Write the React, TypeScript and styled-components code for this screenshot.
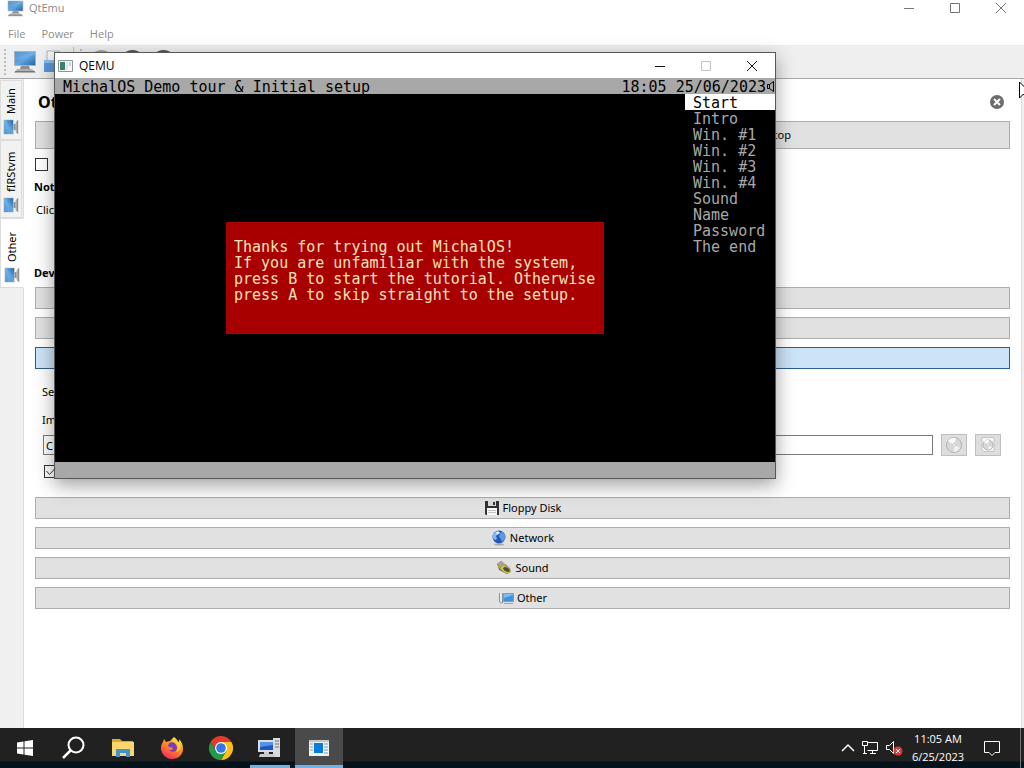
import React from "react";
import styled, { createGlobalStyle } from "styled-components";

const ui = `"Noto Sans", "Open Sans", sans-serif`;
const shell = `"Open Sans", "Noto Sans", sans-serif`;
const term = `"DejaVu Sans Mono", monospace`;

const Global = createGlobalStyle`
  * { box-sizing: border-box; }
  html, body, #root { margin: 0; height: 100%; }
  body { overflow: hidden; background: #fff; font: 11px/16px ${ui}; color: #000; }
  button, input { font: inherit; color: inherit; margin: 0; }
  svg { display: block; flex: none; }
`;

const Desktop = styled.div`
  position: relative;
  display: flex;
  flex-direction: column;
  height: 100%;
`;

const AppWindow = styled.div`
  flex: 1;
  min-height: 0;
  display: flex;
  flex-direction: column;
`;

const AppTitle = styled.header`
  display: flex;
  height: 24px;
  padding-left: 7px;
  color: #8a8a8a;
  font: 11px/16px ${shell};
`;

const TitleText = styled.span`
  flex: 1;
  margin-left: 5px;
`;

const WinButton = styled.button<{ $tone: string }>`
  display: flex;
  align-items: center;
  justify-content: center;
  width: 46px;
  height: 100%;
  padding: 0;
  border: 0;
  background: none;
  color: ${(p) => p.$tone};
`;

const Controls = styled.div<{ $height: number }>`
  display: flex;
  height: ${(p) => p.$height}px;
`;

const MenuBar = styled.nav`
  display: flex;
  gap: 2px;
  height: 22px;
  padding-left: 1px;
  border-bottom: 1px solid #ececec;
`;

const MenuItem = styled.button`
  padding: 0 7px 2px;
  border: 0;
  background: none;
  color: #8c8c8c;
  font: 11px/18px ${shell};
`;

const ToolBar = styled.div`
  display: flex;
  align-items: center;
  gap: 6px;
  height: 33px;
  padding-left: 4px;
  background: #efefef;
  border-bottom: 1px solid #a9a9a9;
`;

const Grip = styled.span`
  width: 3px;
  height: 26px;
  border-left: 2px dotted #bcbcbc;
`;

const ToolSeparator = styled.span`
  width: 1px;
  height: 30px;
  background: #c6c6c6;
`;

const ToolButton = styled.button`
  padding: 0;
  border: 0;
  background: none;
`;

const RoundTool = styled.button<{ $tone: string }>`
  width: 25px;
  height: 25px;
  padding: 0;
  border: 0;
  border-radius: 50%;
  background: ${(p) => p.$tone};
`;

const Body = styled.div`
  flex: 1;
  min-height: 0;
  display: flex;
  background: #f0f0f0;
`;

const TabStrip = styled.div`
  width: 24px;
  padding-top: 1px;
  border-right: 1px solid #dcdcdc;
`;

const Tab = styled.button<{ $active?: boolean; $height: number }>`
  display: flex;
  align-items: center;
  gap: 5px;
  width: ${(p) => (p.$active ? 24 : 22)}px;
  height: ${(p) => p.$height}px;
  padding: 4px 0;
  border: 1px solid #dcdcdc;
  border-left-color: ${(p) => (p.$active ? "#fff" : "#dcdcdc")};
  background: ${(p) => (p.$active ? "#fff" : "#f2f2f2")};
  line-height: 20px;
  writing-mode: vertical-rl;
  transform: rotate(180deg);
  white-space: nowrap;
  & > svg { transform: rotate(90deg); }
`;

const Panel = styled.main`
  flex: 1;
  min-width: 0;
  padding: 12px 11px;
  background: #fff;
`;

const PanelEdge = styled.div`
  width: 3px;
  border-left: 1px solid #dcdcdc;
`;

const PanelHead = styled.div`
  display: flex;
  align-items: center;
  justify-content: space-between;
  height: 22px;
  padding: 0 6px 0 3px;
`;

const Heading = styled.h1`
  margin: 0;
  font: bold 16px/22px ${ui};
`;

const CloseButton = styled.button`
  padding: 0;
  border: 0;
  background: none;
`;

const PowerRow = styled.div`
  display: grid;
  grid-template-columns: 1fr 1fr;
  gap: 8px;
  margin-top: 8px;
`;

const Push = styled.button<{ $tall?: boolean; $selected?: boolean }>`
  display: flex;
  align-items: center;
  justify-content: center;
  gap: 3px;
  width: 100%;
  height: ${(p) => (p.$tall ? 28 : 22)}px;
  padding: 0;
  border: 1px solid ${(p) => (p.$selected ? "#2b5f8c" : "#adadad")};
  background: ${(p) => (p.$selected ? "#cce4f7" : "#e1e1e1")};
`;

const StopText = styled.span`
  margin-left: 22px;
`;

const Check = styled.label`
  display: flex;
  align-items: center;
  gap: 6px;
  height: 16px;
`;

const Box = styled.input`
  appearance: none;
  width: 13px;
  height: 13px;
  border: 1px solid #333;
  background: #fff;
`;

const BoxWrap = styled.span`
  display: grid;
  & > * { grid-area: 1 / 1; }
  & > svg { z-index: 1; pointer-events: none; }
`;

const Options = styled.section`
  display: flex;
  flex-direction: column;
  gap: 7px;
  margin-top: 7px;
`;

const SubHead = styled.h2`
  margin: 0 0 0 -1px;
  font: bold 11px/16px ${ui};
`;

const Line = styled.p`
  margin: 0 0 0 1px;
`;

const Devices = styled.section`
  margin-top: 47px;
`;

const Stack = styled.div`
  display: flex;
  flex-direction: column;
  gap: 8px;
  margin-top: 6px;
`;

const MediaForm = styled.div`
  display: flex;
  flex-direction: column;
  padding: 15px 9px 12px 7px;
  gap: 12px;
`;

const PathRow = styled.div`
  display: flex;
  align-items: center;
  gap: 8px;
  padding-left: 1px;
  margin: -6px 0 -5px;
`;

const PathInput = styled.input`
  flex: 1;
  min-width: 0;
  height: 20px;
  padding: 0 2px;
  border: 1px solid #7a7a7a;
  background: #fff;
`;

const IconButton = styled.button`
  display: flex;
  align-items: center;
  justify-content: center;
  width: 26px;
  height: 22px;
  padding: 0;
  border: 1px solid #bfbfbf;
  background: #dedede;
`;

const MediaCheck = styled(Check)`
  padding-left: 2px;
`;

const QemuWindow = styled.section`
  position: absolute;
  left: 54px;
  top: 52px;
  width: 722px;
  border: 1px solid #585858;
  background: #000;
  box-shadow: 0 6px 18px rgba(0, 0, 0, 0.38);
`;

const QemuTitle = styled.header`
  display: flex;
  align-items: center;
  height: 25px;
  padding-left: 3px;
  background: #fff;
  font: 12px/16px ${shell};
`;

const Screen = styled.div`
  font: 15px/16px ${term};
  white-space: pre;
`;

const ScreenBar = styled.div`
  display: flex;
  align-items: center;
  justify-content: space-between;
  height: 16px;
  padding: 2px 0 0 8px;
  background: #a8a8a8;
  color: #000;
`;

const Clock = styled.span`
  display: flex;
  align-items: center;
`;

const ScreenBody = styled.div`
  display: grid;
  height: 368px;
  & > * { grid-area: 1 / 1; }
`;

const Steps = styled.ol`
  place-self: start end;
  width: 90px;
  margin: 0;
  padding: 0;
  list-style: none;
  color: #a8a8a8;
`;

const Step = styled.li<{ $active?: boolean }>`
  height: 16px;
  padding: 1px 0 0 8px;
  background: ${(p) => (p.$active ? "#fff" : "none")};
  color: ${(p) => (p.$active ? "#000" : "#a8a8a8")};
`;

const Dialog = styled.div`
  place-self: center;
  width: 378px;
  height: 112px;
  padding: 17px 8px;
  background: #a80000;
  color: #f6e3b8;
`;

const TaskBar = styled.footer`
  display: flex;
  height: 40px;
  background: linear-gradient(#212121 33px, #03121b 34px);
  color: #fff;
`;

const Task = styled.button<{ $state?: "open" | "active" }>`
  display: flex;
  align-items: center;
  justify-content: center;
  width: ${(p) => (p.$state === "open" ? 40 : p.$state ? 48 : 49)}px;
  margin: 0 ${(p) => (p.$state === "open" ? 5 : 0)}px;
  padding: ${(p) => (p.$state ? 3 : 0)}px 0 0;
  border: 0;
  border-bottom: ${(p) => (p.$state ? "3px solid #6fb3e6" : "0")};
  background: ${(p) => (p.$state === "active" ? "#4a4a4a" : "none")};
`;

const Tray = styled.div`
  display: flex;
  align-items: center;
  gap: 7px;
  margin-left: auto;
`;

const TrayButton = styled.button`
  padding: 0;
  border: 0;
  background: none;
`;

const TrayClock = styled.time`
  width: 56px;
  margin: 0 10px 0 0;
  font: 11px/18px ${shell};
  text-align: center;
  white-space: nowrap;
`;

const ShowDesktop = styled.button`
  width: 4px;
  height: 40px;
  margin-left: 12px;
  padding: 0;
  border: 0;
  border-left: 1px solid #777;
  background: none;
`;

const Pointer = styled.div`
  position: absolute;
  right: 0;
  top: 81px;
  width: 5px;
  overflow: hidden;
`;

const Monitor = ({ size }: { size: number }) => (
  <svg width={size} height={size} viewBox="0 0 24 24">
    <defs>
      <linearGradient id="monitorGlass" x1="0" y1="0" x2="1" y2="1">
        <stop offset="0" stopColor="#2c6db4" />
        <stop offset=".5" stopColor="#62a8e2" />
        <stop offset="1" stopColor="#2566aa" />
      </linearGradient>
    </defs>
    <path d="M1 1h22v15H1z" fill="#a9b4bc" />
    <path d="M2 2h20v13H2z" fill="url(#monitorGlass)" />
    <path d="M2 10C9 10 14 6 22 5v-3H2z" fill="#81bdeb" opacity=".45" />
    <path d="M8 16h8l1 3H7z" fill="#8d8d8d" />
    <path d="M4 19h15l4 4H1z" fill="#b0b0b0" />
    <path d="M2 21.500h20" stroke="#777" />
  </svg>
);

const WinMark = ({ kind }: { kind: "min" | "max" | "close" }) => (
  <svg width="12" height="12" viewBox="0 0 12 12" fill="none" stroke="currentColor">
    {kind === "min" && <path d="M1 6.500h10" />}
    {kind === "max" && <path d="M1.500 1.500h9v9h-9z" />}
    {kind === "close" && <path d="M1 1l10 10M11 1L1 11" />}
  </svg>
);

const WindowControls = ({ height, tone, maxTone }: { height: number; tone: string; maxTone: string }) => (
  <Controls $height={height}>
    <WinButton $tone={tone} aria-label="Minimize"><WinMark kind="min" /></WinButton>
    <WinButton $tone={maxTone} aria-label="Maximize"><WinMark kind="max" /></WinButton>
    <WinButton $tone={tone} aria-label="Close"><WinMark kind="close" /></WinButton>
  </Controls>
);

const Floppy = () => (
  <svg width="16" height="16" viewBox="0 0 16 16">
    <path d="M1 1h14v14H2l-1-1z" fill="#303236" />
    <path d="M4 1h8v5H4z" fill="#d9d9d9" />
    <path d="M9 2h2v3H9z" fill="#34363a" />
    <path d="M3 8h10v7H3z" fill="#f7f7f7" />
    <path d="M4 10.500h8M4 12.500h8" stroke="#c4c4c4" />
  </svg>
);

const Globe = () => (
  <svg width="16" height="16" viewBox="0 0 16 16">
    <ellipse cx="8" cy="14.500" rx="5" ry="1" fill="#aaa" />
    <circle cx="8" cy="7" r="6.500" fill="#2458b8" />
    <path d="M2 5C3 2 6 1 8 1L7 4 5 6 6 9 4 10C2 9 1 7 2 5z" fill="#80b8ee" />
    <path d="M9 3l3-1 2 3v4l-3 3-1-3-2-2z" fill="#5c9be2" />
    <path d="M5 2q3-1 4 1l-3 2z" fill="#e4f2ff" />
  </svg>
);

const Speaker = () => (
  <svg width="16" height="16" viewBox="0 0 16 16">
    <path d="M1 4l4-3 9 7 1 4-4 2-8-4z" fill="#77736a" />
    <path d="M1 4l4-3 5 4-4 4z" fill="#aaa28a" />
    <ellipse cx="10" cy="9.500" rx="5" ry="3" transform="rotate(28 10 9.500)" fill="#d0c944" />
    <ellipse cx="10.500" cy="9.500" rx="3.500" ry="2" transform="rotate(28 10.500 9.500)" fill="#4d4b43" />
    <path d="M1 5l6 6" stroke="#c8bd53" />
  </svg>
);

const OtherDevices = () => (
  <svg width="16" height="16" viewBox="0 0 16 16">
    <path d="M1.500 3v8q0 2 2 2h1V3" fill="#e6e9ee" stroke="#8995a3" />
    <path d="M5.500 3.500h10v8h-10z" fill="#3f91da" stroke="#8a98a6" />
    <path d="M6 8l9-3v-1H6z" fill="#7fbbed" />
    <path d="M6 13.500h9" stroke="#a3a3a3" />
  </svg>
);

const Disc = ({ framed }: { framed?: boolean }) => (
  <svg width="18" height="18" viewBox="0 0 18 18">
    {framed && <path d="M3 1.500h12v14H5l-2-2z" fill="#f7f7f7" stroke="#c4c4c4" />}
    <circle cx="9" cy="9" r={framed ? 5 : 7.500} fill="#d8d8d8" stroke="#b2b2b2" />
    <path d={framed ? "M9 9L5 6q2-3 5-2z" : "M9 9L3 5q3-4 8-3z"} fill="#f8f8f8" />
    <path d={framed ? "M9 9l4 2q-2 3-4 2z" : "M9 9l6 3q-3 4-6 4z"} fill="#f2f2f2" />
    <circle cx="9" cy="9" r="1.500" fill="#f4f4f4" stroke="#cdcdcd" />
  </svg>
);

const machineTabs = [
  { name: "Main", height: 60 },
  { name: "fIRStvm", height: 78 },
  { name: "Other", height: 70, active: true },
];

const steps = ["Start", "Intro", "Win. #1", "Win. #2", "Win. #3", "Win. #4", "Sound", "Name", "Password", "The end"];

const message = `Thanks for trying out MichalOS!
If you are unfamiliar with the system,
press B to start the tutorial. Otherwise
press A to skip straight to the setup.`;

const MachineManager = () => (
  <AppWindow>
    <AppTitle>
      <Monitor size={17} />
      <TitleText>QtEmu</TitleText>
      <WindowControls height={15} tone="#777" maxTone="#777" />
    </AppTitle>
    <MenuBar>
      {["File", "Power", "Help"].map((m) => <MenuItem key={m}>{m}</MenuItem>)}
    </MenuBar>
    <ToolBar>
      <Grip />
      <ToolButton aria-label="New machine"><Monitor size={24} /></ToolButton>
      <ToolButton aria-label="Open machine">
        <svg width="24" height="24" viewBox="0 0 24 24">
          <path d="M4 1h12l3 3v10H4z" fill="#f7f7f7" stroke="#aab2bb" />
          <path d="M1 10h22v12H1z" fill="#5b98da" />
          <path d="M1 10h22v3H1z" fill="#8bbcec" />
        </svg>
      </ToolButton>
      <ToolSeparator />
      <Grip />
      <RoundTool $tone="#a5a5a5" aria-label="Start machine" />
      <RoundTool $tone="#555" aria-label="Stop machine" />
      <RoundTool $tone="#555" aria-label="Reset machine" />
    </ToolBar>
    <Body>
      <TabStrip role="tablist">
        {machineTabs.map((t) => (
          <Tab key={t.name} role="tab" aria-selected={!!t.active} $height={t.height} $active={t.active}>
            <Monitor size={16} />
            {t.name}
          </Tab>
        ))}
      </TabStrip>
      <Panel>
        <PanelHead>
          <Heading>Ot</Heading>
          <CloseButton aria-label="Close tab">
            <svg width="14" height="14" viewBox="0 0 14 14">
              <circle cx="7" cy="7" r="7" fill="#6c6c6c" />
              <path d="M4 4l6 6M10 4l-6 6" stroke="#fff" strokeWidth="2" />
            </svg>
          </CloseButton>
        </PanelHead>
        <PowerRow>
          <Push $tall aria-label="Start" />
          <Push $tall><StopText>Stop</StopText></Push>
        </PowerRow>
        <Options>
          <Check><Box type="checkbox" />S</Check>
          <SubHead>Note</SubHead>
          <Line>Click</Line>
        </Options>
        <Devices>
          <SubHead>Dev</SubHead>
          <Stack>
            <Push aria-label="Display" />
            <Push aria-label="Hard disk" />
            <Push $selected aria-label="Optical drive" />
          </Stack>
          <MediaForm>
            <span>Se</span>
            <label htmlFor="image-path">Im</label>
            <PathRow>
              <PathInput id="image-path" defaultValue="C" />
              <IconButton aria-label="Choose drive"><Disc /></IconButton>
              <IconButton aria-label="Choose image"><Disc framed /></IconButton>
            </PathRow>
            <MediaCheck>
              <BoxWrap>
                <Box type="checkbox" defaultChecked aria-label="Enabled" />
                <svg width="13" height="13" viewBox="0 0 13 13" fill="none" stroke="#333">
                  <path d="M2.500 6l3 3.500 5.500-6" />
                </svg>
              </BoxWrap>
            </MediaCheck>
          </MediaForm>
          <Stack>
            <Push><Floppy />Floppy Disk</Push>
            <Push><Globe />Network</Push>
            <Push><Speaker />Sound</Push>
            <Push><OtherDevices />Other</Push>
          </Stack>
        </Devices>
      </Panel>
      <PanelEdge />
    </Body>
  </AppWindow>
);

const Emulator = () => (
  <QemuWindow>
    <QemuTitle>
      <svg width="16" height="14" viewBox="0 0 16 14">
        <path d="M.5 1.500h14v11H.5z" fill="#f4f6f7" stroke="#8c9599" />
        <path d="M2 3h5v8H2z" fill="#39836d" />
        <path d="M8 3h2v8H8z" fill="#dbe6ee" />
        <path d="M11 4h2M11 6h2" stroke="#a5adb3" />
      </svg>
      <TitleText>QEMU</TitleText>
      <WindowControls height={25} tone="#111" maxTone="#c4c4c4" />
    </QemuTitle>
    <Screen>
      <ScreenBar>
        <span>MichalOS Demo tour &amp; Initial setup</span>
        <Clock>
          18:05 25/06/2023
          <svg width="9" height="16" viewBox="0 0 9 16" fill="none" stroke="#000">
            <path d="M1.500 5.500h2v4h-2zM3.500 5.500l4-3v10l-4-3" />
          </svg>
        </Clock>
      </ScreenBar>
      <ScreenBody>
        <Dialog>{message}</Dialog>
        <Steps>
          {steps.map((s, i) => <Step key={s} $active={i === 0}>{s}</Step>)}
        </Steps>
      </ScreenBody>
      <ScreenBar />
    </Screen>
  </QemuWindow>
);

const Shell = () => (
  <TaskBar>
    <Task aria-label="Start menu">
      <svg width="18" height="18" viewBox="0 0 18 18" fill="#fff">
        <path d="M1 3.500l6.500-1v6H1zM8.500 2.300L17 1v7.500H8.500zM1 9.500h6.500v6L1 14.500zM8.500 9.500H17V17l-8.500-1.300z" />
      </svg>
    </Task>
    <Task aria-label="Search">
      <svg width="24" height="24" viewBox="0 0 24 24" fill="none" stroke="#fff" strokeWidth="2">
        <circle cx="14" cy="9" r="7.500" />
        <path d="M8.500 14.500L1 22" strokeWidth="2.500" />
      </svg>
    </Task>
    <Task aria-label="File Explorer">
      <svg width="22" height="20" viewBox="0 0 22 20">
        <path d="M0 1h8l2 2h11v6H0z" fill="#dca630" />
        <path d="M0 4h22v14H0z" fill="#fbd66c" />
        <path d="M4 19v-8h14v8h-4v-4H8v4z" fill="#4193cc" />
      </svg>
    </Task>
    <Task aria-label="Firefox">
      <svg width="24" height="24" viewBox="0 0 24 24">
        <defs>
          <linearGradient id="foxFire" x1=".8" y1="0" x2=".3" y2="1">
            <stop offset="0" stopColor="#ffe649" />
            <stop offset=".45" stopColor="#ff8f21" />
            <stop offset="1" stopColor="#f42b62" />
          </linearGradient>
        </defs>
        <path d="M14 1c3 2 4 4 4 5 2 0 1-3 1-3 3 3 4 6 4 10 0 6-5 10-11 10S1 18 1 12c0-3 1-5 2-6l1-3 2 3 4-1z" fill="url(#foxFire)" />
        <path d="M9 7c4-2 8 1 8 5s-5 5-8 2c2 1 4-1 4-2-1-1-3 0-5-2 0-1 1-2 1-3z" fill="#7a3bc4" />
        <path d="M14 1c-2 3 0 4 2 6s3 6 0 9c4-1 6-6 3-10-2 0-5-2-5-5z" fill="#ffd535" />
      </svg>
    </Task>
    <Task aria-label="Chrome">
      <svg width="24" height="24" viewBox="0 0 24 24">
        <path d="M12 6h10.400A12 12 0 0 1 12 24l5.200-9z" fill="#fbc116" />
        <path d="M1.600 6A12 12 0 0 1 22.400 6H12l-5 9z" fill="#e33b2e" />
        <path d="M1.600 6l5.200 9 5.200 3 5.200-3L12 24A12 12 0 0 1 1.600 6z" fill="#269a48" />
        <circle cx="12" cy="12" r="6" fill="#fff" />
        <circle cx="12" cy="12" r="4.800" fill="#3478e8" />
      </svg>
    </Task>
    <Task $state="open" aria-label="QtEmu">
      <svg width="24" height="22" viewBox="0 0 24 22">
        <path d="M15 1h7v19h-7z" fill="#d8dadd" />
        <path d="M16 4h5M16 7h5M16 10h5" stroke="#777" />
        <path d="M0 3h17v12H0z" fill="#d9dde3" />
        <path d="M2 5h13v8H2z" fill="#1d59c5" />
        <path d="M2 5h13v3L2 10z" fill="#5692e4" />
        <path d="M6 15h5v2H6zM2 17h14l1 3H1z" fill="#c7cace" />
      </svg>
    </Task>
    <Task $state="active" aria-label="QEMU">
      <svg width="22" height="18" viewBox="0 0 22 18">
        <path d="M1 1h20v16H1z" fill="#eef2f5" />
        <path d="M1 1h20v2H1z" fill="#bac8d1" />
        <path d="M6 4h9v10H6z" fill="#087bdc" />
        <path d="M2 5h3M2 8h3M2 11h3M16 5h4M16 8h4M16 11h4M16 14h4" stroke="#8999a5" />
      </svg>
    </Task>
    <Tray>
      <TrayButton aria-label="Show hidden icons">
        <svg width="14" height="10" viewBox="0 0 14 10" fill="none" stroke="#fff" strokeWidth="1.500">
          <path d="M1 8l6-6 6 6" />
        </svg>
      </TrayButton>
      <TrayButton aria-label="Network status">
        <svg width="17" height="16" viewBox="0 0 17 16" fill="none" stroke="#fff">
          <path d="M5.500 2.500h10v8h-10M.5 1.500h5v4h-5zM2.500 5.500v8M8 13.500h6M10.500 10.500v3M1 13.500h4" />
        </svg>
      </TrayButton>
      <TrayButton aria-label="Volume muted">
        <svg width="17" height="16" viewBox="0 0 17 16" fill="none" stroke="#fff">
          <path d="M.5 5.500h3l4-4v12l-4-4h-3z" />
          <circle cx="12" cy="11" r="4.500" fill="#d83b3b" stroke="none" />
          <path d="M10 9l4 4M14 9l-4 4" />
        </svg>
      </TrayButton>
      <TrayClock>11:05 AM<br />6/25/2023</TrayClock>
      <TrayButton aria-label="Notifications">
        <svg width="18" height="18" viewBox="0 0 18 18" fill="none" stroke="#fff">
          <path d="M1.500 2.500h15v11H12l-3 3-3-3H1.500z" />
        </svg>
      </TrayButton>
      <ShowDesktop aria-label="Show desktop" />
    </Tray>
  </TaskBar>
);

export default function App() {
  return (
    <>
      <Global />
      <Desktop>
        <MachineManager />
        <Shell />
        <Emulator />
        <Pointer>
          <svg width="12" height="19" viewBox="0 0 12 19">
            <path d="M.5 1v16l4-4 3 5 2-1-2-5h4z" fill="#fff" stroke="#000" />
          </svg>
        </Pointer>
      </Desktop>
    </>
  );
}
